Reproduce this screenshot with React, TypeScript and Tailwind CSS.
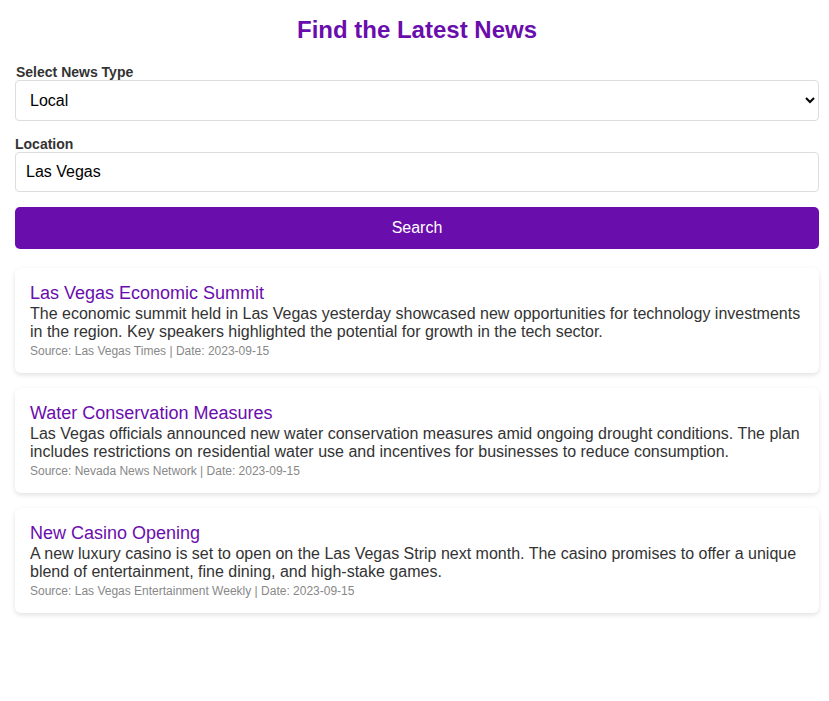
import React from "react";

const news = [
  {
    title: "Las Vegas Economic Summit",
    body: "The economic summit held in Las Vegas yesterday showcased new opportunities for technology investments in the region. Key speakers highlighted the potential for growth in the tech sector.",
    source: "Las Vegas Times",
    date: "2023-09-15",
  },
  {
    title: "Water Conservation Measures",
    body: "Las Vegas officials announced new water conservation measures amid ongoing drought conditions. The plan includes restrictions on residential water use and incentives for businesses to reduce consumption.",
    source: "Nevada News Network",
    date: "2023-09-15",
  },
  {
    title: "New Casino Opening",
    body: "A new luxury casino is set to open on the Las Vegas Strip next month. The casino promises to offer a unique blend of entertainment, fine dining, and high-stake games.",
    source: "Las Vegas Entertainment Weekly",
    date: "2023-09-15",
  },
];

export default function App() {
  return (
    <div
      className="bg-white pl-[15px] pt-[16px] pb-[40px] text-[#333]"
      style={{ fontFamily: '"Liberation Sans", Arial, sans-serif' }}
    >
      <div className="w-[804px]">
        <h1 className="m-0 text-center text-[24px] font-bold leading-[28px] text-[#6a0dad]">
          Find the Latest News
        </h1>
        <div className="mt-[20px]">
          <label className="block pl-[1px] text-[14px] font-bold leading-[16px] text-[#333]">
            Select News Type
          </label>
          <select
            className="block h-[41px] w-full rounded-[4px] border border-[#ddd] bg-white px-[10px] text-[16px] text-black outline-none"
            defaultValue="local"
          >
            <option value="local">Local</option>
            <option value="international">International</option>
          </select>
        </div>
        <div className="mt-[15px]">
          <label className="block text-[14px] font-bold leading-[16px] text-[#333]">
            Location
          </label>
          <input
            className="block h-[40px] w-full rounded-[4px] border border-[#ddd] bg-white px-[10px] text-[16px] text-black outline-none"
            defaultValue="Las Vegas"
          />
        </div>
        <button className="mt-[15px] block h-[42px] w-full rounded-[5px] bg-[#6a0dad] text-[16px] text-white">
          Search
        </button>
        <div className="mt-[19px] flex flex-col gap-[15px]">
          {news.map((n) => (
            <div
              key={n.title}
              className="h-[105px] rounded-[6px] bg-white p-[15px] shadow-[0_2px_5px_rgba(0,0,0,0.12)]"
            >
              <h2 className="m-0 text-[18px] font-normal leading-[21px] text-[#6a0dad]">
                {n.title}
              </h2>
              <p className="m-0 mt-[1px] text-[16px] leading-[18.4px] text-[#333]">{n.body}</p>
              <p className="m-0 mt-[2px] text-[12px] leading-[14px] text-[#888]">
                Source: {n.source} | Date: {n.date}
              </p>
            </div>
          ))}
        </div>
      </div>
    </div>
  );
}
